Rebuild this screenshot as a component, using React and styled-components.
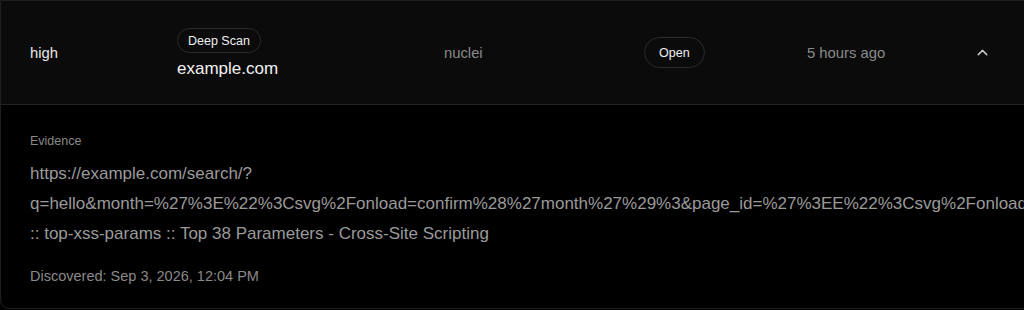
import React from "react";
import styled, { createGlobalStyle } from "styled-components";
import { ChevronUp } from "lucide-react";

const GlobalStyle = createGlobalStyle`
  html, body {
    margin: 0;
    padding: 0;
    background: #000;
    overflow: hidden;
  }
  body {
    font-family: "Liberation Sans", Arial, sans-serif;
  }
`;

const Card = styled.div`
  width: 1120px;
  height: 309px;
  box-sizing: border-box;
  border: 1px solid #1f1f1f;
  border-radius: 0 0 9px 9px;
  background: #000;
  overflow: hidden;
`;

const Row = styled.div`
  display: grid;
  grid-template-columns: 147px 267px 200px 163px 167px 40px;
  align-items: center;
  height: 103px;
  padding-left: 29px;
  background: #0b0b0b;
  border-bottom: 1px solid #232323;
`;

const Cell = styled.div`
  font-size: 14.8px;
  color: ${(p) => (p.muted ? "#8a8a8a" : "#e8e8e8")};
`;

const Target = styled.div`
  display: flex;
  flex-direction: column;
  align-items: flex-start;
  gap: 6px;
  padding-top: 2px;
`;

const Pill = styled.span`
  display: inline-flex;
  align-items: center;
  justify-content: center;
  box-sizing: border-box;
  height: ${(p) => p.h}px;
  padding: 0 ${(p) => p.px}px;
  border: 1px solid #2c2c2c;
  border-radius: 999px;
  font-size: 12.5px;
  color: #f0f0f0;
  background: #0b0b0b;
`;

const Host = styled.span`
  font-size: 17px;
  color: #f2f2f2;
`;

const Toggle = styled.div`
  display: flex;
  align-items: center;
  color: #c8c8c8;
`;

const Details = styled.div`
  padding: 29px 0 0 29px;
  width: 995px;
  overflow: hidden;
`;

const Label = styled.div`
  font-size: 12.5px;
  color: #8a8a8a;
  margin-bottom: 11px;
`;

const Evidence = styled.div`
  font-size: 17px;
  line-height: 30px;
  color: #9a9a9a;
  white-space: nowrap;
  overflow: hidden;
  text-overflow: clip;
`;

const Found = styled.div`
  margin-top: 19px;
  font-size: 14.5px;
  color: #8a8a8a;
`;

export default function App() {
  return (
    <>
      <GlobalStyle />
      <Card>
        <Row>
          <Cell>high</Cell>
          <Target>
            <Pill h={25} px={10}>Deep Scan</Pill>
            <Host>example.com</Host>
          </Target>
          <Cell muted>nuclei</Cell>
          <Cell>
            <Pill h={31} px={14}>Open</Pill>
          </Cell>
          <Cell muted>5 hours ago</Cell>
          <Toggle>
            <ChevronUp size={17} strokeWidth={2} />
          </Toggle>
        </Row>
        <Details>
          <Label>Evidence</Label>
          <Evidence>
            <div>https://example.com/search/?</div>
            <div>
              q=hello&amp;month=%27%3E%22%3Csvg%2Fonload=confirm%28%27month%27%29%3&amp;page_id=%27%3EE%22%3Csvg%2Fonload=confirm%28%27page_id%27%29%3
            </div>
            <div>:: top-xss-params :: Top 38 Parameters - Cross-Site Scripting</div>
          </Evidence>
          <Found>Discovered: Sep 3, 2026, 12:04 PM</Found>
        </Details>
      </Card>
    </>
  );
}
